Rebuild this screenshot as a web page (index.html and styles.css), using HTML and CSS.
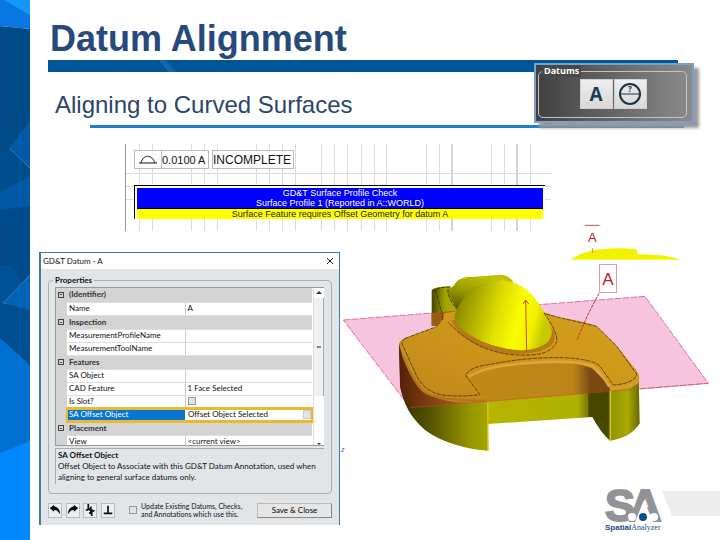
FILE: index.html
```
<!DOCTYPE html>
<html lang="en">
<head>
<meta charset="utf-8">
<title>Datum Alignment</title>
<link rel="stylesheet" href="styles.css">
</head>
<body>
<div class="slide">
  <aside class="rail" aria-hidden="true">
    <svg viewBox="0 0 30 540" preserveAspectRatio="none">
      <path fill="#0877e0" d="M0 0H30V29L0 26Z"/>
      <path fill="#1697fb" d="M4 0H30V15Z"/>
      <path fill="#004b87" d="M0 26L30 29V125L0 160Z"/>
      <path fill="#004d8e" d="M0 156L9 148L30 168V178L0 194Z"/>
      <path fill="#005aa8" d="M9 148L30 121V168Z"/>
      <path fill="#0058a6" d="M0 192L30 176V208L0 212Z"/>
      <path fill="#004a89" d="M0 210L30 206V275L3 303L0 300Z"/>
      <path fill="#0060b0" d="M0 265L12 266L22 283L3 303L0 297Z" opacity=".35"/>
      <path fill="#004f92" d="M0 297L3 303L30 308V367L0 340Z"/>
      <path fill="#0063b5" d="M3 303L30 275V310Z"/>
      <path fill="#006fd0" d="M0 338L30 365V443L0 455Z"/>
      <path fill="#0088fc" d="M0 453L30 441V540H0Z"/>
    </svg>
  </aside>
  <main class="content">
    <header class="heading">
      <h1>Datum Alignment</h1>
      <div class="bar"></div>
      <h2>Aligning to Curved Surfaces</h2>
      <div class="rule"></div>
      <fieldset class="datums">
        <legend>Datums</legend>
        <button type="button" aria-label="Datum A">A</button>
        <button type="button" aria-label="Datum query">
          <svg viewBox="0 0 24 24"><circle cx="12" cy="12" r="10" fill="none" stroke="#173344" stroke-width="2"/><path d="M2 12H22" stroke="#173344" stroke-width="1"/><text x="12" y="10" text-anchor="middle" font-size="8" font-weight="bold" fill="#173344">?</text></svg>
        </button>
      </fieldset>
    </header>

    <section class="report">
      <svg class="lines" viewBox="0 0 426 87" preserveAspectRatio="none" aria-hidden="true">
        <path d="M14.500 0V87M27.500 0V87M66.500 0V87M79.500 0V87M92.500 0V87M131.500 0V87M144.500 0V87M157.500 0V87M170.500 0V87M196.500 0V87M209.500 0V87M222.500 0V87M236.500 0V87M249.500 0V87M261.500 0V87M301.500 0V87M314.500 0V87M366.500 0V87M379.500 0V87M405.500 0V87M0 29.500H426M0 42.500H426M0 55.500H426" stroke="#dcdcdc"/>
        <path d="M327 0V87M392 0V87" stroke="#d4d4d4" stroke-width="2"/>
        <path d="M.5 0V87" stroke="#999"/>
      </svg>
      <div class="frames">
        <div class="frame">
          <span class="symbol"><svg viewBox="0 0 20 12"><path d="M1 10H19M3 10C5 1 14 1 17 10" fill="none" stroke="#111"/></svg></span>
          <span class="value">0.0100 A</span>
        </div>
        <div class="frame status">INCOMPLETE</div>
      </div>
      <table class="check">
        <tbody>
          <tr><th>GD&amp;T Surface Profile Check</th></tr>
          <tr><th>Surface Profile 1 (Reported in A::WORLD)</th></tr>
          <tr><td>Surface Feature requires Offset Geometry for datum A</td></tr>
        </tbody>
      </table>
    </section>

    <section class="work">
      <div class="dialog" role="dialog" aria-labelledby="dlg">
        <div class="titlebar"><span id="dlg">GD&amp;T Datum - A</span><button type="button" aria-label="Close"><svg viewBox="0 0 8 8"><path d="M1 1L7 7M7 1L1 7" stroke="#222"/></svg></button></div>
        <fieldset class="props">
          <legend>Properties</legend>
          <div class="gridbox">
            <table>
              <colgroup><col class="gutter"><col class="names"><col></colgroup>
              <tbody>
                <tr class="cat"><td class="g"><i></i></td><th colspan="2">(Identifier)</th></tr>
                <tr><td class="g"></td><td>Name</td><td>A</td></tr>
                <tr class="cat"><td class="g"><i></i></td><th colspan="2">Inspection</th></tr>
                <tr><td class="g"></td><td>MeasurementProfileName</td><td></td></tr>
                <tr><td class="g"></td><td>MeasurementToolName</td><td></td></tr>
                <tr class="cat"><td class="g"><i></i></td><th colspan="2">Features</th></tr>
                <tr><td class="g"></td><td>SA Object</td><td></td></tr>
                <tr><td class="g"></td><td>CAD Feature</td><td>1 Face Selected</td></tr>
                <tr><td class="g"></td><td><label for="slot">Is Slot?</label></td><td><input type="checkbox" id="slot"></td></tr>
                <tr class="sel"><td class="g"></td><td>SA Offset Object</td><td><div class="pick">Offset Object Selected<button type="button" aria-label="Browse"></button></div></td></tr>
                <tr class="cat"><td class="g"><i></i></td><th colspan="2">Placement</th></tr>
                <tr><td class="g"></td><td>View</td><td>&lt;current view&gt;</td></tr>
              </tbody>
            </table>
            <div class="scroll" aria-hidden="true">
              <svg viewBox="0 0 10 10"><path d="M2 6L5 3L8 6Z" fill="#333"/></svg>
              <div class="thumb"></div>
              <svg viewBox="0 0 10 10"><path d="M3 4H7L5 6Z" fill="#333"/></svg>
            </div>
          </div>
          <div class="desc"><strong>SA Offset Object</strong><br>Offset Object to Associate with this GD&amp;T Datum Annotation, used when<br>aligning to general surface datums only.</div>
        </fieldset>
        <div class="actions">
          <div class="tools">
            <button type="button" aria-label="Undo"><svg viewBox="0 0 14 14"><path d="M1 5L6 1V3C10 3 13 7 13 12C10 8 9 7 6 7V9Z"/></svg></button>
            <button type="button" aria-label="Redo"><svg viewBox="0 0 14 14"><path d="M13 5L8 1V3C4 3 1 7 1 12C4 8 5 7 8 7V9Z"/></svg></button>
            <button type="button" aria-label="Pick leader"><svg viewBox="0 0 14 14"><path d="M5 0V5L9 9V14M8 3V6M4 5L11 8L6 11M2 7H5" fill="none" stroke="#111" stroke-width="2"/></svg></button>
            <button type="button" aria-label="Perpendicular"><svg viewBox="0 0 14 14"><path d="M7 2V11M2 11H12" stroke="#111" stroke-width="2"/></svg></button>
          </div>
          <label class="update"><input type="checkbox"><span>Update Existing Datums, Checks,<br>and Annotations which use this.</span></label>
          <button type="button" class="save">Save &amp; Close</button>
        </div>
      </div>

      <div class="visual">
        <svg class="model" viewBox="0 0 1140 720" role="img" aria-label="Machined part with datum plane A">
          <defs>
            <linearGradient id="outer"><stop offset="0" stop-color="#302f00"/><stop offset=".35" stop-color="#555400"/><stop offset=".8" stop-color="#979600"/><stop offset="1" stop-color="#a5a500"/></linearGradient>
            <linearGradient id="outerTint"><stop offset="0" stop-color="#552207"/><stop offset=".5" stop-color="#8c4c13"/><stop offset="1" stop-color="#c98d28"/></linearGradient>
            <linearGradient id="inner"><stop offset="0" stop-color="#b5b500"/><stop offset=".86" stop-color="#b0b000"/><stop offset="1" stop-color="#626000"/></linearGradient>
            <linearGradient id="innerTint"><stop offset="0" stop-color="#bd8b18"/><stop offset=".85" stop-color="#ba8619"/><stop offset="1" stop-color="#794412"/></linearGradient>
            <linearGradient id="right"><stop offset="0" stop-color="#929100"/><stop offset=".6" stop-color="#aaa900"/><stop offset="1" stop-color="#686800"/></linearGradient>
            <linearGradient id="top" x1="0" y1="1" x2="1" y2="0"><stop offset="0" stop-color="#bd861a"/><stop offset=".6" stop-color="#cf991b"/><stop offset="1" stop-color="#d2a01b"/></linearGradient>
            <linearGradient id="dome" x1="0" y1=".1" x2="1" y2=".3"><stop offset="0" stop-color="#7b7b08"/><stop offset=".22" stop-color="#a5a500"/><stop offset=".5" stop-color="#dede00"/><stop offset=".72" stop-color="#fcfc00"/><stop offset=".88" stop-color="#f0f000"/><stop offset="1" stop-color="#c8c800"/></linearGradient>
            <linearGradient id="bump" x1="0" y1="1" x2=".4" y2="0"><stop offset="0" stop-color="#3d3d00"/><stop offset=".5" stop-color="#8f8f00"/><stop offset="1" stop-color="#c0c000"/></linearGradient>
            <linearGradient id="side"><stop offset="0" stop-color="#464500"/><stop offset=".4" stop-color="#a2a200"/><stop offset="1" stop-color="#b5b400"/></linearGradient>
          </defs>
          <path d="M10 300L915 229L1105 490L210 563Z" fill="#f6c4df" stroke="#cc3c74" stroke-width="2" stroke-dasharray="20 4"/>
          <path d="M275 212Q278 201 330 198L375 280L330 320L275 317Z" fill="url(#side)"/>
          <path d="M275 280L350 272L350 315L275 317Z" fill="#975d14"/>
          <path d="M322 210C330 204 340 202 346 190C355 177 370 170 395 171L480 164C500 164 514 174 520 187L440 280H358Q333 240 322 210Z" fill="url(#bump)"/>
          <path d="M177 370L181 500C190 550 210 590 255 630C310 670 380 688 445 692L442 530L250 480Z" fill="url(#outer)"/>
          <path d="M177 370L180 500Q188 535 210 563L441 545V520L250 450Z" fill="url(#outerTint)"/>
          <path d="M441 540L750 512L757 591L443 612Z" fill="url(#inner)"/>
          <path d="M745 500L810 500V662Q782 638 757 591L745 590Z" fill="#484700"/>
          <path d="M810 500L896 465L899 610C880 641 850 657 810 662Z" fill="url(#right)"/>
          <path d="M385 475Q430 430 600 420Q710 416 755 440L752 519L441 545Z" fill="url(#innerTint)"/>
          <path d="M748 435L812 500V513L750 518Z" fill="#7b4712"/>
          <path d="M177 372Q180 361 196 354L292 319Q308 306 312 280L345 274L610 276L655 292Q740 305 770 319L830 377L890 452Q904 470 893 492Q870 509 811 513L805 494L776 458Q750 436 700 431Q570 425 453 445Q384 461 390 474L438 532V548Q330 552 274 528Q239 507 224 477L188 410Z" fill="url(#top)"/>
          <path d="M190 409Q222 490 251 514Q290 543 438 542" fill="none" stroke="#b77320" stroke-width="7"/>
          <path d="M387 469Q445 436 570 429Q710 418 758 439Q785 458 808 500" fill="none" stroke="#e1a638" stroke-width="8"/>
          <path d="M811 505Q868 504 893 484" fill="none" stroke="#d99c30" stroke-width="9"/>
          <path d="M335 300C350 354 445 400 535 402C620 398 656 376 640 331L590 285Z" fill="#b77a19"/>
          <path d="M343 294C355 222 440 178 490 181Q548 190 581 230Q623 281 635 331C640 372 590 391 540 391C440 383 358 338 343 294Z" fill="url(#dome)"/>
          <g fill="none" stroke="#291b08" stroke-width="2" stroke-dasharray="13 3">
            <path d="M196 355Q179 366 190 380L231 470Q258 520 315 526Q369 531 420 524L377 466Q388 441 450 433Q560 411 670 413Q765 418 782 441L820 495Q885 490 890 462L829 377L770 319L655 292L612 280Q650 330 651 363Q637 402 570 405C450 411 371 359 324 306"/>
            <path d="M308 300V287L286 210Q296 202 329 201M324 207Q320 228 350 268M196 355L292 319"/>
          </g>
          <path d="M210 563L1105 490M274 280L345 274M441 545V690" fill="none" stroke="#c34b43" stroke-width="2" stroke-opacity=".75"/>
          <path d="M443 547V692M811 512V661" stroke="#cccc08" stroke-width="5"/>
          <path d="M560 395L557 242M549 252L557 240L566 252" fill="none" stroke="#cf4d0c" stroke-width="3"/>
          <path d="M777 220L743 285L711 360" fill="none" stroke="#c82e36" stroke-width="3" stroke-dasharray="10 3"/>
          <rect x="779" y="133" width="51" height="84" fill="#fff" stroke="#cf6870" stroke-width="2"/>
          <text class="mark" x="804" y="194" text-anchor="middle" font-size="51">A</text>
          <path d="M735 16H779" stroke="#c05058" stroke-width="3"/>
          <text class="mark" x="757" y="66" text-anchor="middle" font-size="39">A</text>
          <path d="M693 119Q720 98 765 90Q820 80 889 88L894 103Q970 102 1023 119Z" fill="#f2f200"/>
          <path d="M758 85V98" stroke="#c04020" stroke-width="2"/>
          <text x="3" y="697" font-size="21" font-style="italic" fill="#5353ba">z</text>
        </svg>
        <svg class="logo" viewBox="0 0 120 60" role="img" aria-label="SpatialAnalyzer">
          <path d="M62 11H120V36H72Z" fill="#ededed"/>
          <text class="initials" x="5" y="41">S</text><text class="initials" x="29" y="41">A</text>
          <path d="M44 20L53 42H35Z" fill="#fff"/>
          <circle cx="32" cy="37" r="4" fill="#fff"/><circle cx="54" cy="37" r="4" fill="#fff"/><circle cx="43" cy="37" r="4" fill="#075090"/>
          <text x="5" y="50" class="brand"><tspan class="strong">Spatial</tspan><tspan class="serif">Analyzer</tspan></text>
        </svg>
      </div>
    </section>
  </main>
</div>
</body>
</html>
```
FILE: styles.css
```
* { box-sizing: border-box; }
body { margin: 0; background: #fff; font-family: "Liberation Sans", Arial, sans-serif; }
button { padding: 0; font: inherit; }
svg { display: block; }

.slide { display: grid; grid-template-columns: 30px minmax(0, 1fr); min-height: 100vh; }
.rail { position: relative; }
.rail svg { position: absolute; width: 100%; height: 100%; }
.content { padding-left: 9px; }

/* Heading */
.heading { position: relative; padding-top: 18px; }
h1 { margin: 0 0 0 11px; font-size: 36px; line-height: 42px; color: #264a7b; }
.bar { height: 12px; margin: 0 42px 0 9px; background: linear-gradient(50deg, transparent 92px, #146cb4 93px, #0a62aa 98px, transparent 99px), #005596; }
h2 { margin: 18px 0 0 16px; font-size: 24px; font-weight: normal; line-height: 30px; color: #2b4568; }
.rule { height: 3px; margin: 5px 36px 0 51px; background: #1f7dd0; }

.datums {
  position: absolute; top: 63px; right: 26px; display: flex; justify-content: center; gap: 1px;
  width: 160px; height: 60px; margin: 0; padding: 14px 2px 0 0; border: 2px solid #7c9fcd;
  background: linear-gradient(90deg, #414141, #8b8b8b); box-shadow: 5px 5px 3px #999;
}
.datums::before { content: ""; position: absolute; inset: 6px 5px 3px 2px; border: 1px solid #c2c2c2; border-radius: 5px; }
.datums legend { position: absolute; top: 0; left: 6px; padding: 0 2px; background: #474747; color: #fff; font: bold 9px/12px "Open Sans", sans-serif; }
.datums button { position: relative; display: grid; place-items: center; width: 33px; height: 30px; border: 1px solid #d0d0d0; background: linear-gradient(#eee, #d8d8d8); color: #1c3a50; font: bold 19px/28px "Open Sans", sans-serif; }
.datums button svg { width: 24px; height: 24px; }

/* Report */
.report { position: relative; width: 426px; max-width: 100%; height: 87px; margin: 16px 0 0 86px; padding: 6px 6px 0 9px; }
.lines { position: absolute; inset: 0; width: 100%; height: 100%; }
.frames { position: relative; display: flex; gap: 3px; }
.frame { display: flex; height: 19px; border: 1px solid #bbb; background: #fff; font-size: 12px; line-height: 18px; color: #111; }
.symbol { width: 27px; padding: 2px 3px; border-right: 1px solid #bbb; }
.symbol svg { width: 20px; height: 12px; }
.value { width: 46px; font-size: 11px; white-space: nowrap; }
.status { width: 82px; padding-left: 0; }
.check { position: relative; width: 100%; margin-top: 16px; border: solid #000; border-width: 1px 0 0 1px; border-spacing: 0; padding: 2px 2px 0 2px; background: #fff; text-align: center; font-size: 9px; line-height: 10px; }
.check th, .check td { padding: 0; }
.check th { background: #00f; color: #fff; font-weight: normal; }
.check td { border-top: 1px solid #000; background: #ff0; color: #222; }

/* Dialog */
.work { display: grid; grid-template-columns: 301px minmax(0, 1fr); margin-top: 21px; align-items: start; }
.dialog { border: solid #3b7da5; border-width: 1px 1px 0 2px; padding-bottom: 7px; background: #e1e5e8; font: 8px/10px Lato, sans-serif; color: #111; }
.titlebar { display: flex; justify-content: space-between; align-items: center; height: 16px; padding: 0 5px 0 2px; background: #fff; }
.titlebar button { border: 0; background: none; }
.titlebar svg { width: 8px; height: 8px; }
.props { min-width: 0; margin: 6px 7px 0; padding: 2px 7px 9px 6px; border: 1px solid #a9aeb2; border-radius: 4px; }
.props legend { height: 10px; padding: 0 2px; margin-left: -2px; font-weight: bold; }
.gridbox { display: grid; grid-template-columns: minmax(0, 1fr) 11px; height: 159px; overflow: hidden; border: 1px solid #999; border-right: 0; }
.gridbox table { width: 100%; table-layout: fixed; border-collapse: collapse; background: #fff; }
.gutter { width: 11px; }
.names { width: 118px; }
.gridbox tr { height: 13px; }
.gridbox td, .gridbox th { padding: 0 2px; text-align: left; border-bottom: 1px solid #ddd; line-height: 9px; white-space: nowrap; }
.gridbox td + td + td { border-left: 1px solid #ccc; }
.gridbox .g { padding: 0 2px; background: #d4d4d4; border-color: #d4d4d4; }
.gridbox .cat { height: 14px; }
.gridbox .cat th { background: #d4d4d4; color: #333; }
.g i { display: block; width: 6px; height: 6px; border: 1px solid #444; background: linear-gradient(#444, #444) center / 2px 1px no-repeat; }
input[type="checkbox"] { appearance: none; display: block; width: 8px; height: 8px; margin: 0; border: 1px solid #999; background: #e4e4e4; }
.gridbox .sel td + td { border: solid #ebb92d; border-width: 3px 0 3px 2px; padding-left: 1px; background: #0875d0; color: #fff; }
.gridbox .sel td + td + td { border-width: 3px 2px 3px 0; padding: 0 0 0 3px; background: #fff; color: #111; }
.pick { display: flex; justify-content: space-between; }
.pick button { width: 8px; height: 9px; border: 1px solid #ccc; background: #e4e4e4; }
.scroll { display: flex; flex-direction: column; background: #fff; border-left: 1px solid #ddd; }
.scroll svg { width: 10px; height: 10px; }
.thumb { flex: 0 0 98px; margin-bottom: auto; border-right: 1px solid #aaa; background: linear-gradient(#888, #888) 50% 50% / 4px 2px no-repeat, #f0f0f0; }
.desc { height: 36px; margin-top: 2px; padding: 1px 0 0 2px; border: solid #aaa; border-width: 1px 0 0 1px; line-height: 11px; white-space: nowrap; }
.actions { display: grid; grid-template-columns: 67px minmax(0, 1fr) 75px; gap: 14px; align-items: center; margin: 8px 7px 0; }
.tools { display: flex; justify-content: space-between; }
.tools button { width: 14px; height: 15px; border: 1px solid #bbb; background: #eee; }
.tools svg { width: 12px; height: 12px; }
.update { display: flex; align-items: center; gap: 4px; font: 7px/8px Lato, sans-serif; white-space: nowrap; }
.save { height: 15px; border: 1px solid #bbb; border-right-color: #888; border-bottom-color: #888; background: #e6e6e6; }

/* Model view and logo */
.visual { display: flex; flex-direction: column; align-items: flex-end; margin-top: -32px; }
.model { width: 100%; }
.mark { fill: #ba1923; }
.logo { width: 120px; height: 60px; margin-top: 20px; }
.initials { font-size: 45px; font-weight: bold; fill: #929397; stroke: #929397; stroke-width: 2; }
.brand { font-size: 8px; fill: #174b82; }
.strong { font-weight: bold; }
.serif { font-family: "Liberation Serif", serif; }
```
